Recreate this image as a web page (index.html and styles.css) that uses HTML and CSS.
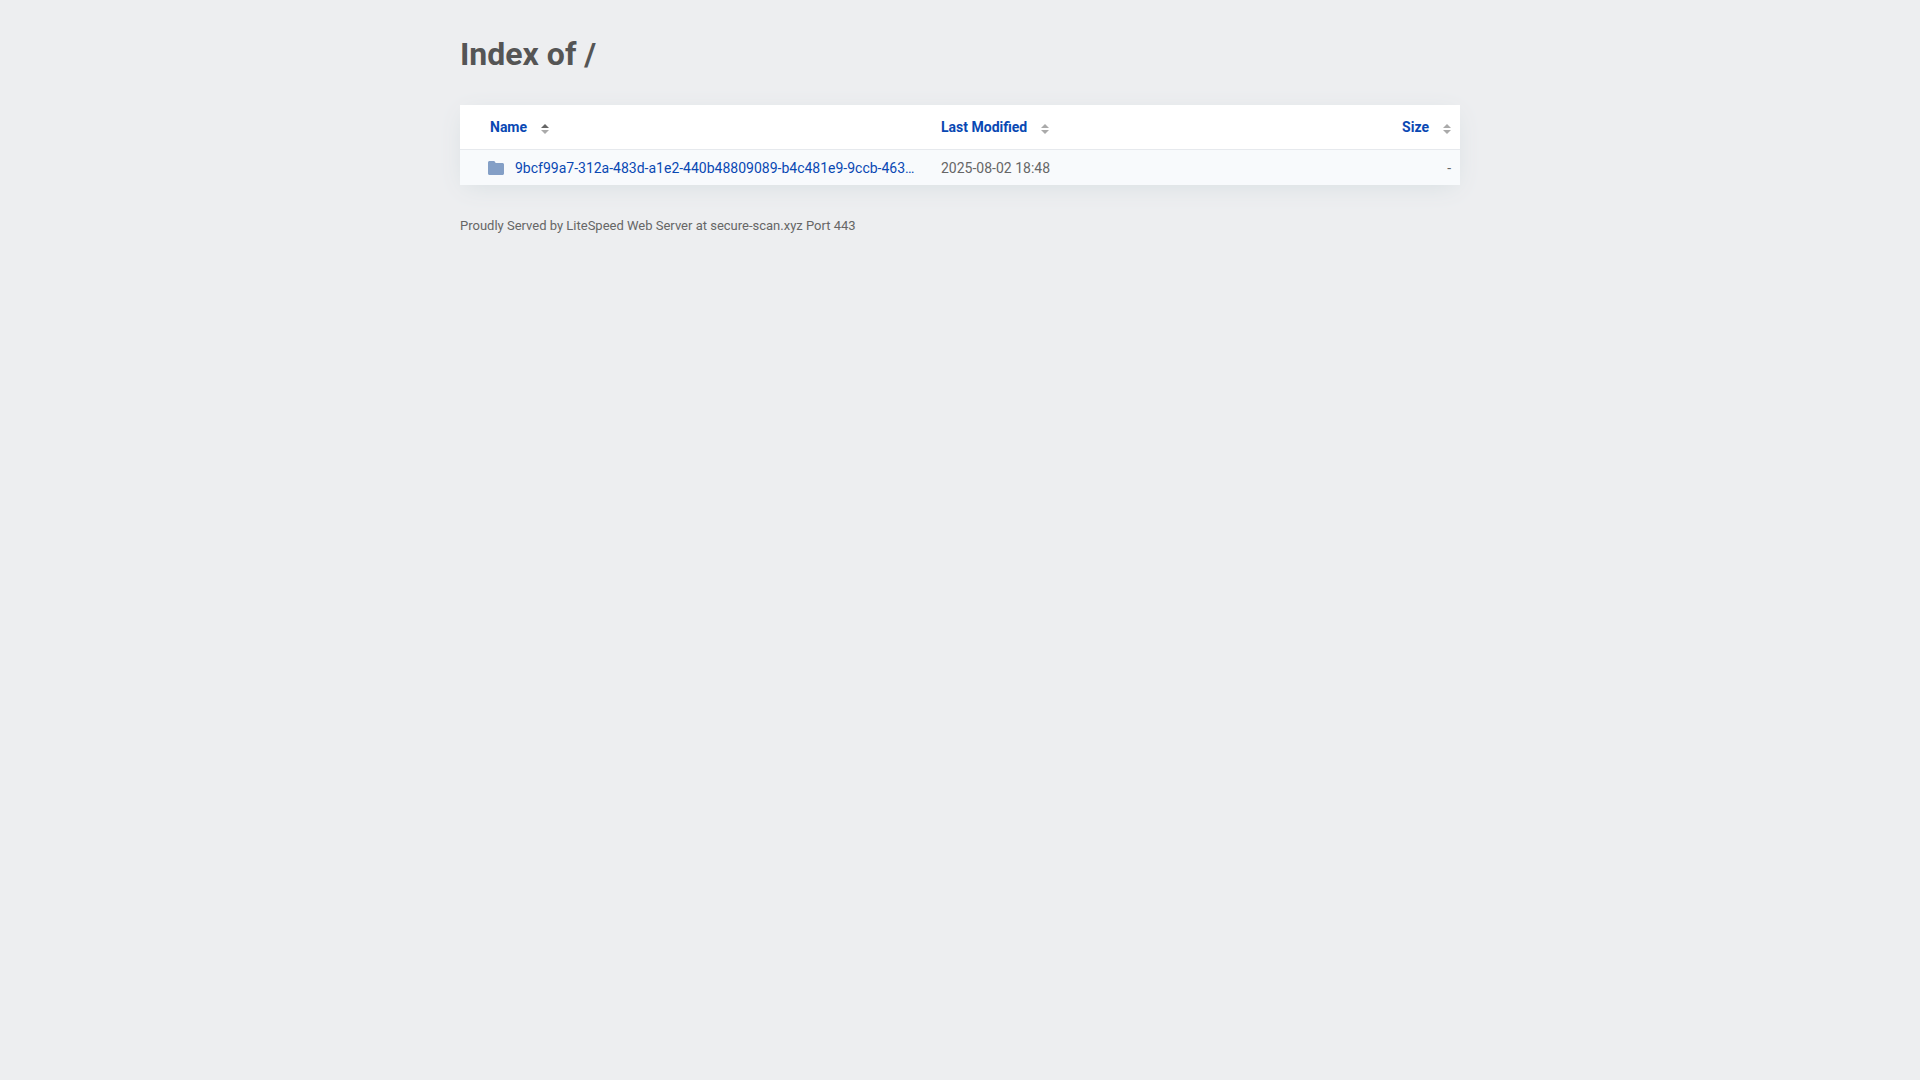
FILE: index.html
```html
<!DOCTYPE html>
<html lang="en">
<head>
    <meta charset="UTF-8">
    <meta name="viewport" content="width=device-width, initial-scale=1.0">
    <title>Index of /</title>
    <link rel="stylesheet" href="styles.css">
</head>
<body>
    <div class="content">
        <h1>Index of /</h1>
        <table class="file-list">
            <thead>
                <tr>
                    <th class="name" aria-sort="ascending">
                        <a href="#">Name<svg class="sort" viewBox="0 0 8 10" aria-hidden="true"><path fill="#666" d="M4 0l4 4H0z"/><path fill="#aaa" d="M0 6h8l-4 4z"/></svg></a>
                    </th>
                    <th class="modified">
                        <a href="#">Last Modified<svg class="sort" viewBox="0 0 8 10" aria-hidden="true"><path fill="#aaa" d="M4 0l4 4H0zM0 6h8l-4 4z"/></svg></a>
                    </th>
                    <th class="size">
                        <a href="#">Size<svg class="sort" viewBox="0 0 8 10" aria-hidden="true"><path fill="#aaa" d="M4 0l4 4H0zM0 6h8l-4 4z"/></svg></a>
                    </th>
                </tr>
            </thead>
            <tbody>
                <tr>
                    <td class="name">
                        <a class="entry" href="#"><svg class="folder" viewBox="0 0 16 14" aria-hidden="true"><path d="M1.5 0h4.200c.6 0 1 .3 1.300.8L7.600 2h6.900c.8 0 1.500.7 1.500 1.500v9c0 .8-.7 1.500-1.500 1.500h-13C.7 14 0 13.300 0 12.500v-11C0 .7.7 0 1.500 0z"/></svg>9bcf99a7-312a-483d-a1e2-440b48809089-b4c481e9-9ccb-463…</a>
                    </td>
                    <td class="modified">2025-08-02 18:48</td>
                    <td class="size">-</td>
                </tr>
            </tbody>
        </table>
        <footer>Proudly Served by LiteSpeed Web Server at secure-scan.xyz Port 443</footer>
    </div>
</body>
</html>
```
FILE: styles.css
```css
*{
    box-sizing: border-box;
}
body{
    margin: 0;
    padding: 32px 20px;
    background-color: #edeef0;
    color: #666;
    font-family: Roboto, "Liberation Sans", sans-serif;
    font-size: 14px;
    line-height: 20px;
}
a{
    color: #0948b3;
    text-decoration: none;
}
a:hover{
    text-decoration: underline;
}
.content{
    max-width: 1000px;
    margin: 0 auto;
}
h1{
    margin: 0 0 28px;
    color: #555;
    font-size: 32px;
    line-height: 45px;
}

/* file table */
.file-list{
    width: 100%;
    table-layout: fixed;
    border-spacing: 0;
    background-color: #fff;
    box-shadow: 0 5px 25px -5px #d5dde0;
}
.file-list th{
    height: 45px;
    padding: 0 9px 0 11px;
    border-bottom: 1px solid #e6e9ed;
    text-align: left;
}
.file-list td{
    height: 35px;
    padding: 0 9px 0 11px;
    background-color: #f8fafc;
}
.file-list .name{
    width: 47%;
    padding-left: 28px;
}
.file-list th.name{
    padding-left: 30px;
}
.file-list .modified{
    width: 28%;
}
.file-list .size{
    text-align: right;
}
.sort{
    width: 8px;
    height: 10px;
    margin-left: 14px;
    vertical-align: -2px;
}
.entry{
    display: flex;
    align-items: center;
    gap: 11px;
    white-space: nowrap;
}
.folder{
    width: 16px;
    height: 14px;
    flex: none;
    fill: #849fc6;
}
footer{
    margin-top: 31px;
    font-size: 13px;
}
```
